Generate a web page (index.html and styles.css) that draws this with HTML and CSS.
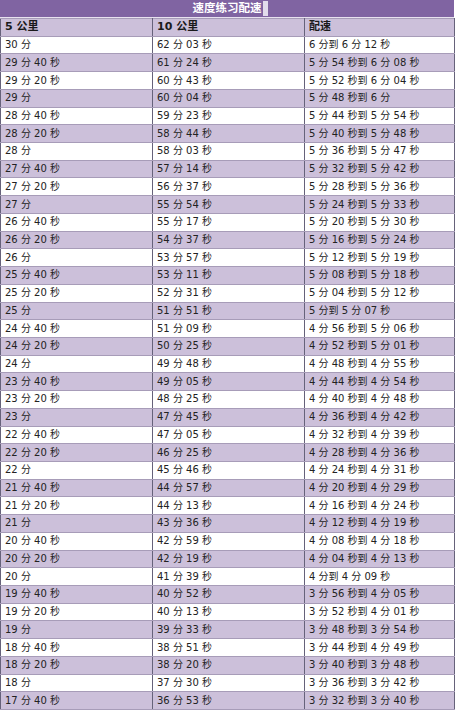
FILE: index.html
```html
<!DOCTYPE html>
<html lang="zh">
<head>
<meta charset="utf-8">
<title>速度练习配速</title>
<link rel="stylesheet" href="styles.css">
</head>
<body>
<div class="sheet">
  <div class="title"><span class="title-text">速度练习配速</span><span class="cursor"></span></div>
  <table class="pace">
    <thead>
      <tr><th>5 公里</th><th>10 公里</th><th>配速</th></tr>
    </thead>
    <tbody>
      <tr><td>30 分</td><td>62 分 03 秒</td><td>6 分到 6 分 12 秒</td></tr>
      <tr><td>29 分 40 秒</td><td>61 分 24 秒</td><td>5 分 54 秒到 6 分 08 秒</td></tr>
      <tr><td>29 分 20 秒</td><td>60 分 43 秒</td><td>5 分 52 秒到 6 分 04 秒</td></tr>
      <tr><td>29 分</td><td>60 分 04 秒</td><td>5 分 48 秒到 6 分</td></tr>
      <tr><td>28 分 40 秒</td><td>59 分 23 秒</td><td>5 分 44 秒到 5 分 54 秒</td></tr>
      <tr><td>28 分 20 秒</td><td>58 分 44 秒</td><td>5 分 40 秒到 5 分 48 秒</td></tr>
      <tr><td>28 分</td><td>58 分 03 秒</td><td>5 分 36 秒到 5 分 47 秒</td></tr>
      <tr><td>27 分 40 秒</td><td>57 分 14 秒</td><td>5 分 32 秒到 5 分 42 秒</td></tr>
      <tr><td>27 分 20 秒</td><td>56 分 37 秒</td><td>5 分 28 秒到 5 分 36 秒</td></tr>
      <tr><td>27 分</td><td>55 分 54 秒</td><td>5 分 24 秒到 5 分 33 秒</td></tr>
      <tr><td>26 分 40 秒</td><td>55 分 17 秒</td><td>5 分 20 秒到 5 分 30 秒</td></tr>
      <tr><td>26 分 20 秒</td><td>54 分 37 秒</td><td>5 分 16 秒到 5 分 24 秒</td></tr>
      <tr><td>26 分</td><td>53 分 57 秒</td><td>5 分 12 秒到 5 分 19 秒</td></tr>
      <tr><td>25 分 40 秒</td><td>53 分 11 秒</td><td>5 分 08 秒到 5 分 18 秒</td></tr>
      <tr><td>25 分 20 秒</td><td>52 分 31 秒</td><td>5 分 04 秒到 5 分 12 秒</td></tr>
      <tr><td>25 分</td><td>51 分 51 秒</td><td>5 分到 5 分 07 秒</td></tr>
      <tr><td>24 分 40 秒</td><td>51 分 09 秒</td><td>4 分 56 秒到 5 分 06 秒</td></tr>
      <tr><td>24 分 20 秒</td><td>50 分 25 秒</td><td>4 分 52 秒到 5 分 01 秒</td></tr>
      <tr><td>24 分</td><td>49 分 48 秒</td><td>4 分 48 秒到 4 分 55 秒</td></tr>
      <tr><td>23 分 40 秒</td><td>49 分 05 秒</td><td>4 分 44 秒到 4 分 54 秒</td></tr>
      <tr><td>23 分 20 秒</td><td>48 分 25 秒</td><td>4 分 40 秒到 4 分 48 秒</td></tr>
      <tr><td>23 分</td><td>47 分 45 秒</td><td>4 分 36 秒到 4 分 42 秒</td></tr>
      <tr><td>22 分 40 秒</td><td>47 分 05 秒</td><td>4 分 32 秒到 4 分 39 秒</td></tr>
      <tr><td>22 分 20 秒</td><td>46 分 25 秒</td><td>4 分 28 秒到 4 分 36 秒</td></tr>
      <tr><td>22 分</td><td>45 分 46 秒</td><td>4 分 24 秒到 4 分 31 秒</td></tr>
      <tr><td>21 分 40 秒</td><td>44 分 57 秒</td><td>4 分 20 秒到 4 分 29 秒</td></tr>
      <tr><td>21 分 20 秒</td><td>44 分 13 秒</td><td>4 分 16 秒到 4 分 24 秒</td></tr>
      <tr><td>21 分</td><td>43 分 36 秒</td><td>4 分 12 秒到 4 分 19 秒</td></tr>
      <tr><td>20 分 40 秒</td><td>42 分 59 秒</td><td>4 分 08 秒到 4 分 18 秒</td></tr>
      <tr><td>20 分 20 秒</td><td>42 分 19 秒</td><td>4 分 04 秒到 4 分 13 秒</td></tr>
      <tr><td>20 分</td><td>41 分 39 秒</td><td>4 分到 4 分 09 秒</td></tr>
      <tr><td>19 分 40 秒</td><td>40 分 52 秒</td><td>3 分 56 秒到 4 分 05 秒</td></tr>
      <tr><td>19 分 20 秒</td><td>40 分 13 秒</td><td>3 分 52 秒到 4 分 01 秒</td></tr>
      <tr><td>19 分</td><td>39 分 33 秒</td><td>3 分 48 秒到 3 分 54 秒</td></tr>
      <tr><td>18 分 40 秒</td><td>38 分 51 秒</td><td>3 分 44 秒到 4 分 49 秒</td></tr>
      <tr><td>18 分 20 秒</td><td>38 分 20 秒</td><td>3 分 40 秒到 3 分 48 秒</td></tr>
      <tr><td>18 分</td><td>37 分 30 秒</td><td>3 分 36 秒到 3 分 42 秒</td></tr>
      <tr><td>17 分 40 秒</td><td>36 分 53 秒</td><td>3 分 32 秒到 3 分 40 秒</td></tr>
    </tbody>
  </table>
</div>
</body>
</html>
```

FILE: styles.css
```css
html, body {
  margin: 0;
  padding: 0;
  background: #ffffff;
}

.sheet {
  width: 454px;
  font-family: "DejaVu Sans", "Noto Sans CJK SC", sans-serif;
  font-size: 10px;
  color: #222222;
}

.title {
  height: 17px;
  background: #8064a2;
  border-bottom: 1px solid #e8e2f0;
  display: flex;
  justify-content: center;
  align-items: center;
  box-sizing: content-box;
}

.title-text {
  color: #ffffff;
  font-weight: bold;
  font-size: 11.5px;
  line-height: 17px;
  padding-left: 6px;
}

.cursor {
  width: 5px;
  height: 15px;
  margin-left: 1px;
  background: #e2dcec;
}

.pace {
  width: 454px;
  border-collapse: collapse;
  table-layout: fixed;
}

.pace th,
.pace td {
  height: 17.72px;
  padding: 0 0 0 4px;
  text-align: left;
  vertical-align: middle;
  white-space: nowrap;
  border-top: 1px solid #a79cb8;
  border-bottom: 1px solid #a79cb8;
  border-left: 1px solid #66627a;
  border-right: 1px solid #66627a;
  box-sizing: border-box;
  line-height: 14px;
}

.pace th {
  font-weight: bold;
  font-size: 11px;
  background: #ccc0da;
  color: #1a1a1a;
}

.pace th:nth-child(1), .pace td:nth-child(1) { width: 152px; }
.pace th:nth-child(2), .pace td:nth-child(2) { width: 152px; }
.pace th:nth-child(3), .pace td:nth-child(3) { width: 150px; }

.pace tbody tr:nth-child(odd) td {
  background: #ffffff;
}

.pace tbody tr:nth-child(even) td {
  background: #ccc0da;
}
```
